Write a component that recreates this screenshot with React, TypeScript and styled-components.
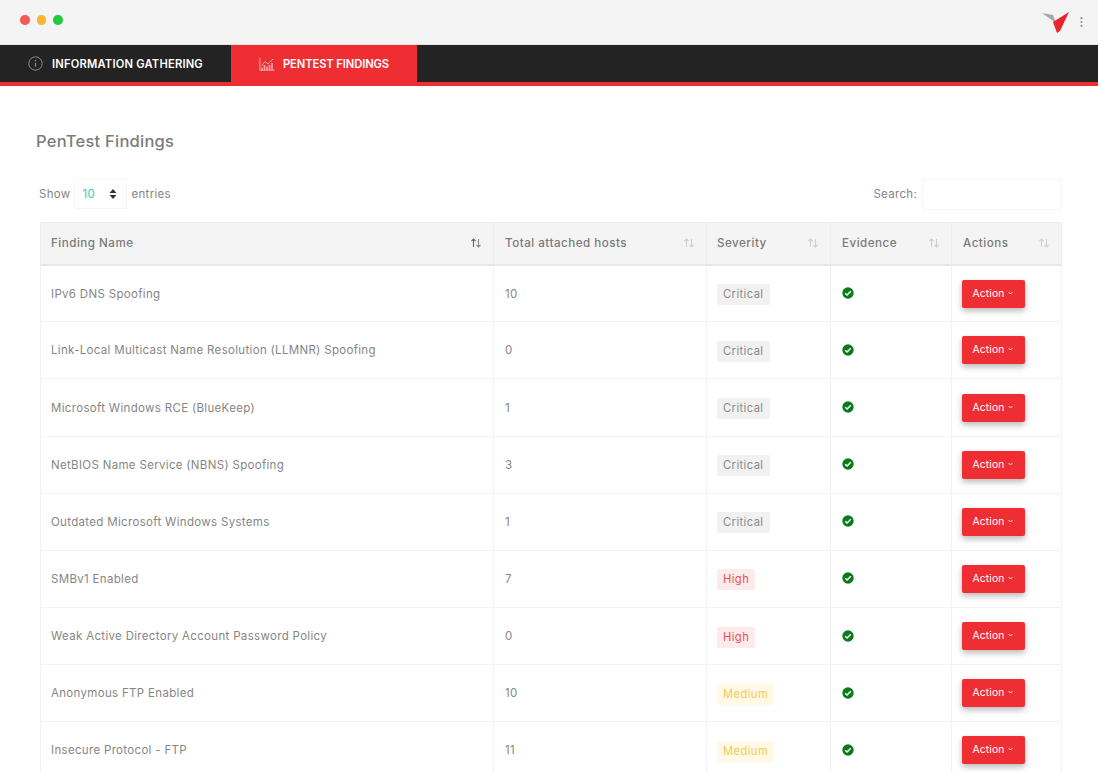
import * as React from 'react';
import styled, {createGlobalStyle} from 'styled-components';

const GlobalStyle = createGlobalStyle`
  html, body {
    margin: 0;
    padding: 0;
    background: #fff;
    overflow: hidden;
  }
  body {
    font-family: Inter, "Open Sans", "Liberation Sans", sans-serif;
  }
`;

const Page = styled.div`
  width: 1098px;
  height: 772px;
  overflow: hidden;
  display: flex;
  flex-direction: column;
`;

const TitleBar = styled.div`
  height: 45px;
  flex: none;
  box-sizing: border-box;
  background: #f4f4f4;
  border-bottom: 1px solid #e4e4e4;
  display: flex;
  align-items: center;
  justify-content: space-between;
  padding: 0 15px 4px 20px;
`;

const Lights = styled.div`
  display: flex;
  gap: 7px;
`;

const Light = styled.span<{$color: string}>`
  width: 9.5px;
  height: 9.5px;
  border-radius: 50%;
  background: ${p => p.$color};
`;

const BrandGroup = styled.div`
  display: flex;
  align-items: center;
  gap: 9px;
  margin-top: 4px;
`;

const NavBar = styled.nav`
  height: 41px;
  flex: none;
  box-sizing: border-box;
  background: #232323;
  border-bottom: 4px solid #ee2e33;
  display: flex;
`;

const NavTab = styled.div<{$active?: boolean}>`
  display: flex;
  align-items: center;
  gap: ${p => (p.$active ? '8px' : '9px')};
  box-sizing: border-box;
  height: 37px;
  padding-left: 28px;
  width: ${p => (p.$active ? '186px' : '231px')};
  background: ${p => (p.$active ? '#ee2e33' : 'transparent')};
  color: #fff;
  font-size: 11.2px;
  font-weight: 600;
  letter-spacing: ${p => (p.$active ? '-0.1px' : '0.19px')};
  white-space: nowrap;
`;

const Content = styled.main`
  padding: 44px 37px 0 40px;
`;

const Title = styled.h1`
  margin: 0 0 26px -4px;
  font-size: 16.5px;
  line-height: 22px;
  font-weight: 500;
  color: #7c7c7c;
  letter-spacing: 0.25px;
`;

const Controls = styled.div`
  display: flex;
  align-items: center;
  justify-content: space-between;
  height: 32px;
  margin-bottom: 12px;
  font-size: 11.5px;
  letter-spacing: 0.3px;
  color: #868686;
`;

const ControlGroup = styled.div`
  display: flex;
  align-items: center;
  gap: 4px;
  &:first-child {
    margin-left: -1px;
  }
`;

const EntriesSelect = styled.div`
  width: 53px;
  height: 30px;
  box-sizing: border-box;
  border: 1px solid #f6f6f6;
  display: flex;
  align-items: center;
  justify-content: space-between;
  padding: 0 9px 0 7px;
  color: #3bc8b8;
`;

const SearchInput = styled.div`
  width: 138px;
  height: 31px;
  margin-left: 2px;
  box-sizing: border-box;
  border: 1px solid #f5f5f5;
`;

const Table = styled.table`
  width: 1021px;
  table-layout: fixed;
  border-collapse: collapse;
  font-size: 11.5px;
  letter-spacing: 0.32px;
  color: #868686;
`;

const HeadCell = styled.th`
  height: 40.7px;
  padding: 0 11px;
  background: #f4f4f4;
  border: 1px solid #eeeeee;
  border-bottom: 2px solid #e8e8e8;
  text-align: left;
  font-weight: 500;
  font-size: 11.6px;
  letter-spacing: 0.5px;
  color: #7a7a7a;
  &:first-child,
  &:nth-child(3) {
    padding-left: 10px;
  }
`;

const HeadInner = styled.div`
  display: flex;
  align-items: center;
  justify-content: space-between;
`;

const Row = styled.tr`
  height: 57.13px;
`;

const Cell = styled.td`
  padding: 0 11px;
  border: 1px solid #f3f3f3;
  vertical-align: middle;
  &:first-child,
  &:nth-child(3) {
    padding-left: 10px;
  }
`;

const badgeColors = {
  Critical: {bg: '#f1f1f1', fg: '#8a8a8a'},
  High: {bg: '#fdebec', fg: '#ea5054'},
  Medium: {bg: '#fff9e6', fg: '#f5ca55'},
};

const Badge = styled.span<{$level: keyof typeof badgeColors}>`
  display: inline-block;
  margin-top: 2px;
  padding: 4px 6px;
  line-height: 13px;
  border-radius: 2px;
  font-size: 11.2px;
  font-weight: 400;
  letter-spacing: 0.42px;
  background: ${p => badgeColors[p.$level].bg};
  color: ${p => badgeColors[p.$level].fg};
`;

const ActionButton = styled.button`
  display: flex;
  align-items: center;
  justify-content: center;
  gap: 3px;
  width: 63px;
  height: 28px;
  margin-left: -1px;
  border: 0;
  border-radius: 2px;
  padding: 0 2px 2px 0;
  background: #ee2e33;
  color: #fff;
  font-family: inherit;
  font-size: 10.3px;
  font-weight: 400;
  letter-spacing: 0.15px;
  box-shadow: 0 3px 6px rgba(0, 0, 0, 0.28);
`;

const SortIcon = ({dark}: {dark?: boolean}) => (
  <svg width="12" height="10" viewBox="0 0 12 10" fill="none" strokeWidth="1.1">
    <path d="M3.5 9V1M1.5 3l2-2 2 2" stroke={dark ? '#666' : '#cfcfcf'} />
    <path d="M8.5 1v8M6.5 7l2 2 2-2" stroke={dark ? '#888' : '#cfcfcf'} />
  </svg>
);

const CheckIcon = () => (
  <svg width="12" height="12" viewBox="0 0 12 12" style={{display: 'block', marginTop: -1}}>
    <circle cx="6" cy="6" r="5.7" fill="#0b7a1e" />
    <path d="M3.2 6.2l1.9 1.8 3.7-3.7" fill="none" stroke="#fff" strokeWidth="1.5" />
  </svg>
);

const InfoIcon = () => (
  <svg width="15" height="15" viewBox="0 0 15 15" fill="none">
    <circle cx="7.5" cy="7.5" r="6.7" stroke="#8a8a8a" strokeWidth="1" />
    <path d="M7.5 6.8v4" stroke="#8a8a8a" strokeWidth="1.3" />
    <circle cx="7.5" cy="4.6" r="0.8" fill="#8a8a8a" />
  </svg>
);

const ChartIcon = () => (
  <svg width="16" height="14" viewBox="0 0 16 14" fill="none" stroke="#f9a9ab" strokeWidth="1">
    <path d="M.8 1v12.2h14.7" />
    <path d="M2.5 9L6 4.5l3 2.5 5-5" />
    <path d="M3 13V10.5M5.5 13V8M8 13V9.5M10.5 13V8M13 13V6" strokeWidth="1.6" />
  </svg>
);

const Logo = () => (
  <svg width="30" height="24" viewBox="0 0 30 24">
    <path d="M1 3l11 2 3 8z" fill="#a4a8ab" />
    <path d="M28 2L19 21l-3 2-4-11z" fill="#e9252b" />
  </svg>
);

const KebabDots = () => (
  <svg width="3" height="10" viewBox="0 0 3 10" fill="#8f8f8f">
    <circle cx="1.5" cy="1.2" r="1.1" />
    <circle cx="1.5" cy="5" r="1.1" />
    <circle cx="1.5" cy="8.8" r="1.1" />
  </svg>
);

const SelectArrows = () => (
  <svg width="8" height="10" viewBox="0 0 8 10" fill="#333">
    <path d="M4 0l3.5 4H.5zM4 10L.5 6h7z" />
  </svg>
);

const Caret = () => (
  <svg width="5" height="4" viewBox="0 0 5 4" fill="none" stroke="#fff" strokeWidth="0.9">
    <path d="M.5 1l2 2 2-2" />
  </svg>
);

const columns = [
  {label: 'Finding Name', width: 453, dark: true},
  {label: 'Total attached hosts', width: 213},
  {label: 'Severity', width: 124},
  {label: 'Evidence', width: 121},
  {label: 'Actions', width: 110},
];

const findings: {name: string; hosts: number; severity: keyof typeof badgeColors}[] = [
  {name: 'IPv6 DNS Spoofing', hosts: 10, severity: 'Critical'},
  {name: 'Link-Local Multicast Name Resolution (LLMNR) Spoofing', hosts: 0, severity: 'Critical'},
  {name: 'Microsoft Windows RCE (BlueKeep)', hosts: 1, severity: 'Critical'},
  {name: 'NetBIOS Name Service (NBNS) Spoofing', hosts: 3, severity: 'Critical'},
  {name: 'Outdated Microsoft Windows Systems', hosts: 1, severity: 'Critical'},
  {name: 'SMBv1 Enabled', hosts: 7, severity: 'High'},
  {name: 'Weak Active Directory Account Password Policy', hosts: 0, severity: 'High'},
  {name: 'Anonymous FTP Enabled', hosts: 10, severity: 'Medium'},
  {name: 'Insecure Protocol - FTP', hosts: 11, severity: 'Medium'},
];

export default function App() {
  return (
    <Page>
      <GlobalStyle />
      <TitleBar>
        <Lights>
          <Light $color="#f55a55" />
          <Light $color="#fbb52e" />
          <Light $color="#25c83f" />
        </Lights>
        <BrandGroup>
          <Logo />
          <KebabDots />
        </BrandGroup>
      </TitleBar>
      <NavBar>
        <NavTab>
          <InfoIcon />
          INFORMATION GATHERING
        </NavTab>
        <NavTab $active>
          <ChartIcon />
          PENTEST FINDINGS
        </NavTab>
      </NavBar>
      <Content>
        <Title>PenTest Findings</Title>
        <Controls>
          <ControlGroup>
            Show
            <EntriesSelect>
              10
              <SelectArrows />
            </EntriesSelect>
            entries
          </ControlGroup>
          <ControlGroup>
            Search:
            <SearchInput />
          </ControlGroup>
        </Controls>
        <Table>
          <colgroup>
            {columns.map(c => <col key={c.label} style={{width: c.width}} />)}
          </colgroup>
          <thead>
            <tr>
              {columns.map(c => (
                <HeadCell key={c.label}>
                  <HeadInner>
                    {c.label}
                    <SortIcon dark={c.dark} />
                  </HeadInner>
                </HeadCell>
              ))}
            </tr>
          </thead>
          <tbody>
            {findings.map(f => (
              <Row key={f.name}>
                <Cell>{f.name}</Cell>
                <Cell>{f.hosts}</Cell>
                <Cell><Badge $level={f.severity}>{f.severity}</Badge></Cell>
                <Cell><CheckIcon /></Cell>
                <Cell>
                  <ActionButton>Action <Caret /></ActionButton>
                </Cell>
              </Row>
            ))}
          </tbody>
        </Table>
      </Content>
    </Page>
  );
}
